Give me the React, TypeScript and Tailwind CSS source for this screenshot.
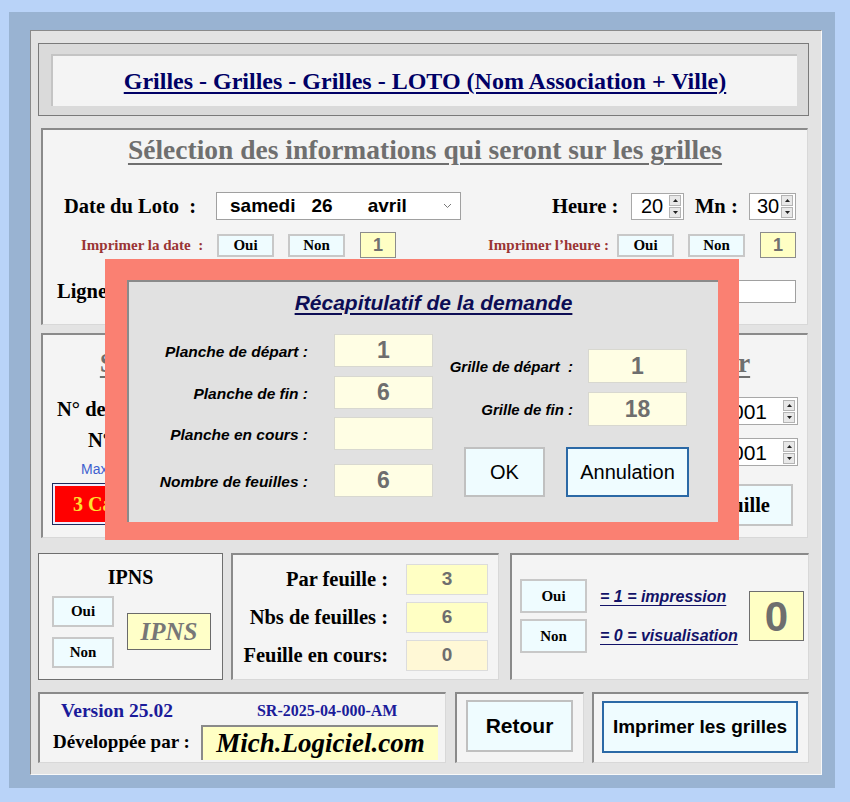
import React from 'react'

const serif = "font-['Liberation_Serif','Times_New_Roman',serif]"
const sans = "font-['Liberation_Sans',Arial,sans-serif]"

function SmallBtn({ label, className = '' }: { label: string; className?: string }) {
  return (
    <div
      className={`flex items-center justify-center bg-[#effcff] border-2 border-[#c8c8c8] ${serif} font-bold text-[15px] text-black ${className}`}
    >
      {label}
    </div>
  )
}

function Arrows() {
  return (
    <div className="flex flex-col gap-[1px]">
      <div className="w-[12px] h-[11px] bg-[#e8e8e8] border border-[#b4b4b4] flex items-center justify-center">
        <svg width="5" height="3" viewBox="0 0 5 3">
          <path d="M0 3 L2.5 0 L5 3Z" fill="#222" />
        </svg>
      </div>
      <div className="w-[12px] h-[11px] bg-[#e8e8e8] border border-[#b4b4b4] flex items-center justify-center">
        <svg width="5" height="3" viewBox="0 0 5 3">
          <path d="M0 0 L2.5 3 L5 0Z" fill="#222" />
        </svg>
      </div>
    </div>
  )
}

function Spinner({ value, className = '' }: { value: string; className?: string }) {
  return (
    <div className={`flex items-center justify-between bg-white border border-[#a8a8a8] pr-[2px] ${className}`}>
      <span className={`${sans} text-[20px] leading-none text-black`}>{value}</span>
      <Arrows />
    </div>
  )
}

function Field({ value, className = '' }: { value: string; className?: string }) {
  return (
    <div className={`flex items-center justify-center ${sans} font-bold text-[#6e6e6e] ${className}`}>{value}</div>
  )
}

const sectionBox =
  'bg-[#f4f4f4] border-t-2 border-l-2 border-r border-b border-t-[#8a8a8a] border-l-[#8a8a8a] border-r-[#d8d8d8] border-b-[#d8d8d8]'

export default function App() {
  return (
    <div className="min-h-screen w-full bg-[#b9d3f8] pt-[12px] pl-[9px]">
      <div className="w-[826px] h-[776px] bg-[#99b3d2] pt-[18px] pl-[21px]">
        <div className="relative w-[792px] h-[745px] bg-[#e3e3e3] border border-t-[#8a8a8a] border-l-[#8a8a8a] border-r-[#f8f8f8] border-b-[#f8f8f8] pt-[12px] pl-[7px]">
          {/* title */}
          <div className="w-[771px] h-[73px] bg-[#dadada] border border-[#7a7a7a] pt-[10px] pl-[12px]">
            <div className="w-[746px] h-[52px] bg-[#f4f4f4] border-t-2 border-l-2 border-[#c4c4c4] flex items-center justify-center">
              <span className={`${serif} font-bold text-[24px] text-[#000066] underline underline-offset-[3px] decoration-[2px]`}>
                Grilles - Grilles - Grilles - LOTO (Nom Association + Ville)
              </span>
            </div>
          </div>

          {/* section informations */}
          <div className={`ml-[3px] mt-[12px] w-[767px] h-[197px] ${sectionBox}`}>
            <div className="pt-[5px] h-[35px] flex justify-center">
              <span className={`${serif} font-bold text-[27.5px] leading-[30px] text-[#6f6f6f] underline underline-offset-[4px] decoration-[2px]`}>
                Sélection des informations qui seront sur les grilles
              </span>
            </div>
            <div className="mt-[27px] h-[28px] flex items-center pl-[21px]">
              <span className={`w-[152px] ${serif} font-bold text-[20.5px] whitespace-pre text-black`}>Date du Loto  :</span>
              <div className="w-[245px] h-[28px] bg-white border border-[#a0a0a0] flex items-center pl-[13px] pr-[8px]">
                <span className={`${sans} font-bold text-[19px] text-black`}>samedi</span>
                <span className={`ml-[16px] ${sans} font-bold text-[19px] text-black`}>26</span>
                <span className={`ml-[35px] ${sans} font-bold text-[19px] text-black`}>avril</span>
                <svg className="ml-auto" width="9" height="6" viewBox="0 0 9 6">
                  <path d="M1 1 L4.5 4.5 L8 1" stroke="#777" strokeWidth="1" fill="none" />
                </svg>
              </div>
              <div className="w-[91px]" />
              <span className={`w-[79px] ${serif} font-bold text-[20.5px] text-black`}>Heure :</span>
              <Spinner value="20" className="w-[53px] h-[27px] pl-[9px]" />
              <span className={`ml-[11px] w-[54px] ${serif} font-bold text-[20.5px] text-black`}>Mn :</span>
              <Spinner value="30" className="w-[47px] h-[27px] pl-[7px]" />
            </div>
            <div className="mt-[12px] h-[26px] flex items-center pl-[38px]">
              <span className={`w-[136px] ${serif} font-bold text-[15px] whitespace-pre text-[#9a3434]`}>Imprimer la date  :</span>
              <SmallBtn label="Oui" className="w-[57px] h-[23px]" />
              <SmallBtn label="Non" className="ml-[14px] w-[57px] h-[23px]" />
              <div className={`ml-[15px] w-[36px] h-[26px] bg-[#ffffc4] border border-[#8c8c8c] flex items-center justify-center ${sans} font-bold text-[18px] text-[#707070]`}>1</div>
              <span className={`ml-[92px] w-[129px] ${serif} font-bold text-[15px] text-[#9a3434]`}>Imprimer l’heure :</span>
              <SmallBtn label="Oui" className="w-[57px] h-[23px]" />
              <SmallBtn label="Non" className="ml-[14px] w-[57px] h-[23px]" />
              <div className={`ml-[15px] w-[36px] h-[26px] bg-[#ffffc4] border border-[#8c8c8c] flex items-center justify-center ${sans} font-bold text-[18px] text-[#707070]`}>1</div>
            </div>
            <div className="mt-[22px] h-[22px] flex items-center pl-[14px] pr-[11px]">
              <span className={`${serif} font-bold text-[20.5px] text-black`}>Ligne supplémentaire :</span>
              <div className="ml-auto w-[420px] h-[23px] bg-white border border-[#a0a0a0]" />
            </div>
          </div>

          {/* section grilles */}
          <div className={`ml-[3px] mt-[8px] w-[767px] h-[205px] ${sectionBox}`}>
            <div className="pt-[13px] h-[43px] flex justify-center">
              <span className={`${serif} font-bold text-[27.5px] leading-[30px] text-[#6f6f6f] underline underline-offset-[4px] decoration-[2px]`}>
                Sélection des numéros de planches et grilles à imprimer
              </span>
            </div>
            <div className="mt-[19px] flex justify-between pr-[9px]">
              <div className="flex flex-col pl-[14px]">
                <span className={`h-[24px] leading-[24px] ${serif} font-bold text-[20.5px] text-black`}>N° de la planche de départ :</span>
                <span className={`mt-[7px] ml-[31px] h-[24px] leading-[24px] ${serif} font-bold text-[20.5px] text-black`}>N° de la planche de fin :</span>
                <span className={`mt-[9px] ml-[24px] h-[16px] leading-[16px] ${sans} text-[14px] text-[#3e5fcf]`}>Max 3 cartons par planche</span>
                <div className="mt-[6px] -ml-[5px] w-[178px] h-[42px] border border-[#1d2a5c] p-[2px] bg-[#eef]">
                  <div className={`w-full h-full bg-[#ff0000] flex items-center pl-[18px] ${serif} font-bold text-[20px] text-[#ffe030]`}>
                    3 Cartons
                  </div>
                </div>
              </div>
              <div className="flex flex-col items-end">
                <div className="w-[150px] h-[28px] bg-white border border-[#a8a8a8] pr-[2px] flex items-center justify-end gap-[16px]">
                  <span className={`${sans} text-[21px] leading-none text-black`}>0001</span>
                  <Arrows />
                </div>
                <div className="mt-[13px] w-[150px] h-[28px] bg-white border border-[#a8a8a8] pr-[2px] flex items-center justify-end gap-[16px]">
                  <span className={`${sans} text-[21px] leading-none text-black`}>0001</span>
                  <Arrows />
                </div>
                <div className={`mt-[18px] mr-[5px] w-[160px] h-[42px] bg-[#effcff] border-2 border-[#c4c4c4] flex items-center justify-center pl-[20px] ${serif} font-bold text-[20.5px] text-black`}>
                  Une feuille
                </div>
              </div>
            </div>
          </div>

          {/* bottom row */}
          <div className="mt-[15px] h-[127px] flex">
            <div className="w-[185px] h-full bg-[#f4f4f4] border border-[#6e6e6e]">
              <div className={`text-center mt-[11px] ${serif} font-bold text-[20px] leading-[24px] text-black`}>IPNS</div>
              <div className="flex mt-[7px] pl-[13px]">
                <div className="flex flex-col">
                  <SmallBtn label="Oui" className="w-[62px] h-[31px]" />
                  <SmallBtn label="Non" className="mt-[10px] w-[62px] h-[31px]" />
                </div>
                <div className={`ml-[13px] mt-[17px] w-[84px] h-[37px] bg-[#ffffc8] border border-[#6a6a6a] flex items-center justify-center ${serif} italic font-bold text-[25px] text-[#777]`}>
                  IPNS
                </div>
              </div>
            </div>

            <div className={`ml-[8px] w-[268px] h-full ${sectionBox} pt-[9px]`}>
              {[
                ['Par feuille :', '3', 'bg-[#ffffc4]'],
                ['Nbs de feuilles :', '6', 'bg-[#ffffc4]'],
                ['Feuille en cours:', '0', 'bg-[#fff8d6]'],
              ].map(([label, v, bg], i) => (
                <div key={label} className={`flex items-center h-[31px] ${i > 0 ? 'mt-[7px]' : ''}`}>
                  <span className={`w-[155px] text-right ${serif} font-bold text-[20.5px] text-black`}>{label}</span>
                  <Field value={v} className={`ml-[18px] w-[82px] h-[31px] border border-[#dcdcdc] text-[19px] ${bg}`} />
                </div>
              ))}
            </div>

            <div className={`ml-[11px] w-[299px] h-full ${sectionBox} pt-[24px] pl-[8px] flex`}>
              <div className="flex flex-col">
                <SmallBtn label="Oui" className="w-[67px] h-[34px]" />
                <SmallBtn label="Non" className="mt-[6px] w-[67px] h-[34px]" />
              </div>
              <div className={`ml-[13px] w-[140px] flex flex-col ${sans} italic font-bold text-[16px] leading-[20px] text-[#121268]`}>
                <span className="mt-[8px] underline underline-offset-[3px] whitespace-nowrap">= 1 = impression</span>
                <span className="mt-[19px] underline underline-offset-[3px] whitespace-nowrap">= 0 = visualisation</span>
              </div>
              <div className={`ml-[9px] mt-[12px] w-[55px] h-[50px] bg-[#ffffc4] border border-[#6e6e6e] flex items-center justify-center ${sans} font-bold text-[42px] text-[#6e6e6e]`}>
                0
              </div>
            </div>
          </div>

          {/* last row */}
          <div className="mt-[12px] h-[71px] flex">
            <div className={`w-[408px] h-full ${sectionBox} pl-[13px]`}>
              <div className={`flex items-center h-[22px] mt-[6px] ${serif} font-bold text-[#1b1b9a]`}>
                <span className="ml-[8px] text-[19.5px]">Version 25.02</span>
                <span className="ml-[84px] text-[16px]">SR-2025-04-000-AM</span>
              </div>
              <div className="flex items-center mt-[3px]">
                <span className={`w-[148px] ${serif} font-bold text-[19px] text-black`}>Développée par :</span>
                <div className={`w-[237px] h-[35px] bg-[#ffffc4] border-t-2 border-l-2 border-[#8a8a8a] flex items-center justify-center ${serif} italic font-bold text-[27px] text-black`}>
                  Mich.Logiciel.com
                </div>
              </div>
            </div>
            <div className={`ml-[9px] w-[129px] h-full ${sectionBox} pt-[6px] pl-[9px]`}>
              <div className={`w-[107px] h-[52px] bg-[#effcff] border-2 border-[#c0c0c0] flex items-center justify-center ${sans} font-bold text-[21px] text-black`}>
                Retour
              </div>
            </div>
            <div className={`ml-[8px] w-[217px] h-full ${sectionBox} pt-[7px] pl-[8px]`}>
              <div className={`w-[196px] h-[52px] bg-[#effcff] border-2 border-[#2b69a6] flex items-center justify-center ${sans} font-semibold text-[19px] text-black`}>
                Imprimer les grilles
              </div>
            </div>
          </div>

          {/* modal */}
          <div className="absolute left-[74px] top-[228px] w-[634px] h-[281px] bg-[#fa8072] pt-[21px] pl-[22px]">
            <div className="w-[591px] h-[242px] bg-[#e1e1e1] border-t-2 border-l-2 border-[#8a8a8a] pt-[9px]">
              <div className="h-[24px] flex justify-center pl-[20px]">
                <span className={`${sans} italic font-bold text-[21px] leading-[24px] text-[#0d0d55] underline underline-offset-[3px]`}>
                  Récapitulatif de la demande
                </span>
              </div>
              <div className="mt-[19px] flex">
                <div className="flex flex-col">
                  {[
                    ['Planche de départ :', '1', ''],
                    ['Planche de fin :', '6', 'mt-[9px]'],
                    ['Planche en cours :', '', 'mt-[8px]'],
                    ['Nombre de feuilles :', '6', 'mt-[14px]'],
                  ].map(([label, v, mt]) => (
                    <div key={label} className={`flex items-center h-[33px] ${mt}`}>
                      <span className={`w-[179px] pt-[3px] text-right ${sans} italic font-bold text-[15.5px] text-black`}>{label}</span>
                      <Field value={v} className="ml-[26px] w-[99px] h-[33px] bg-[#fffee4] border border-[#d8d8d0] text-[23px]" />
                    </div>
                  ))}
                </div>
                <div className="flex flex-col mt-[15px]">
                  {[
                    ['Grille de départ  :', '1', ''],
                    ['Grille de fin :', '18', 'mt-[9px]'],
                  ].map(([label, v, mt]) => (
                    <div key={label} className={`flex items-center h-[34px] ${mt}`}>
                      <span className={`w-[141px] pt-[3px] pr-[1px] text-right whitespace-pre ${sans} italic font-bold text-[15px] text-black`}>{label}</span>
                      <Field value={v} className="ml-[14px] w-[99px] h-[34px] bg-[#fffee4] border border-[#d8d8d0] text-[23px]" />
                    </div>
                  ))}
                  <div className="mt-[21px] flex pl-[31px]">
                    <div className={`w-[81px] h-[50px] bg-[#effcff] border-2 border-[#c0c0c0] flex items-center justify-center ${sans} text-[20px] text-black`}>
                      OK
                    </div>
                    <div className={`ml-[21px] w-[123px] h-[50px] bg-[#effcff] border-2 border-[#2b69a6] flex items-center justify-center ${sans} text-[20px] text-black`}>
                      Annulation
                    </div>
                  </div>
                </div>
              </div>
            </div>
          </div>
        </div>
      </div>
    </div>
  )
}
